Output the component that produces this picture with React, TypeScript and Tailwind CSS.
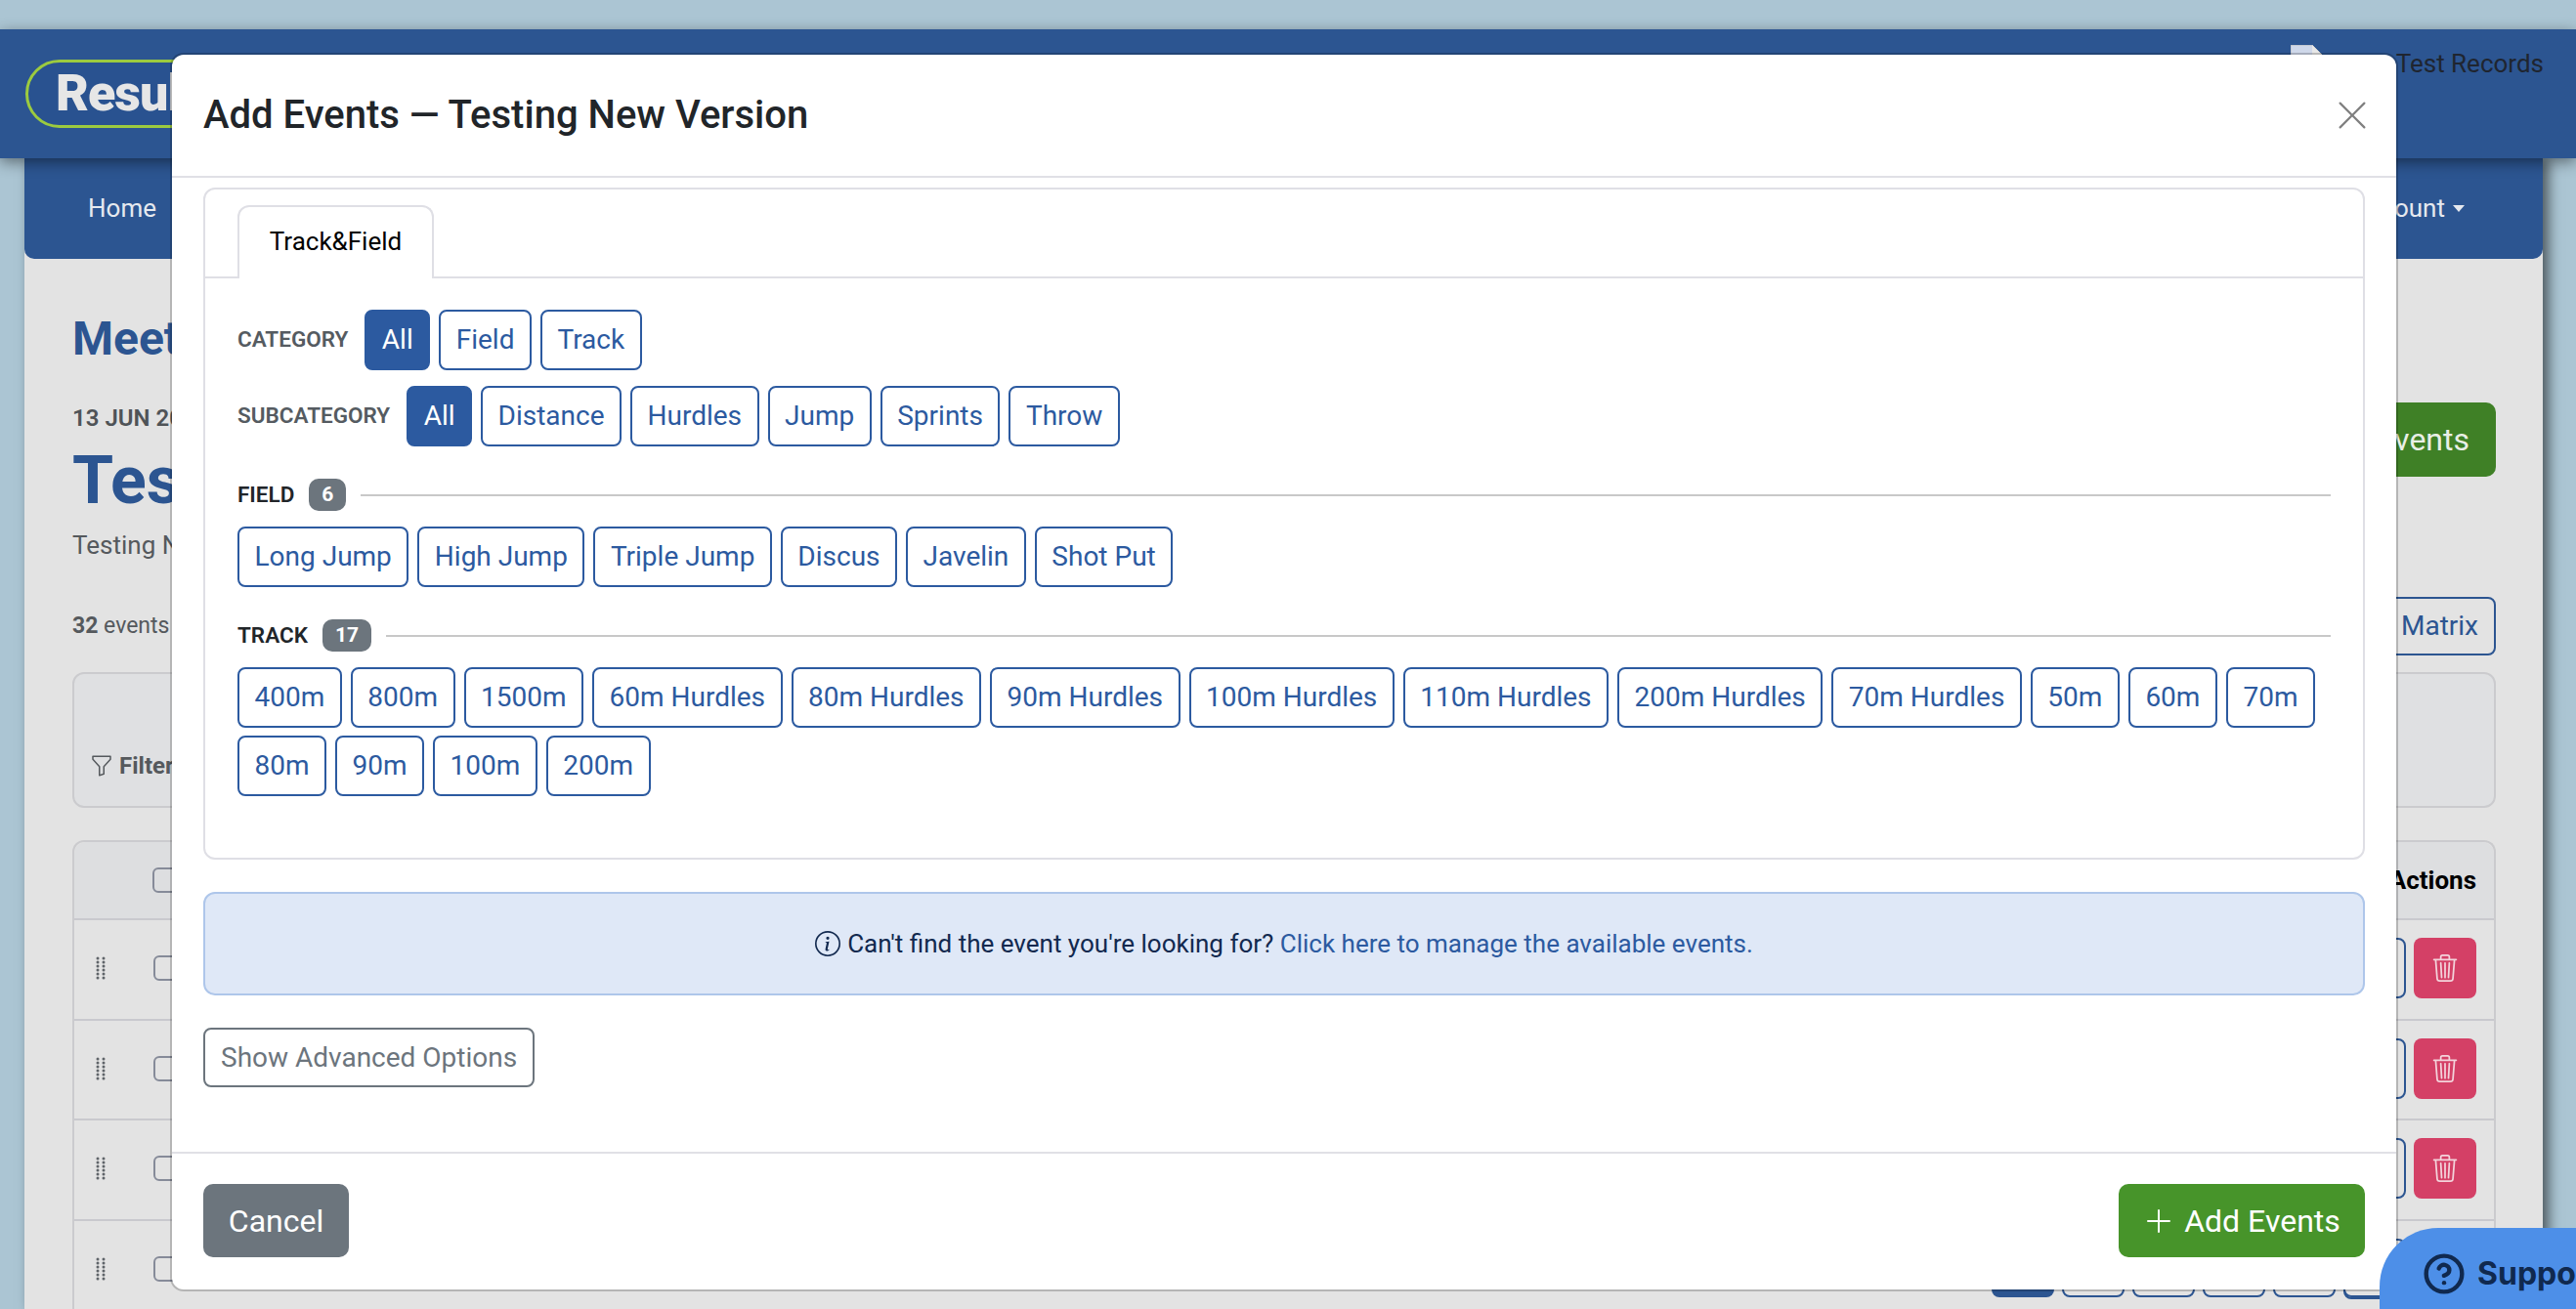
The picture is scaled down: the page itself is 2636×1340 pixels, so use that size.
import { BsFunnel, BsInfoCircle, BsPlusLg, BsTrash3, BsXLg } from 'react-icons/bs';
import { CircleHelp } from 'lucide-react';

const categories = ['Field', 'Track'];
const subcategories = ['Distance', 'Hurdles', 'Jump', 'Sprints', 'Throw'];
const fieldEvents = ['Long Jump', 'High Jump', 'Triple Jump', 'Discus', 'Javelin', 'Shot Put'];
const trackEvents = [
  '400m', '800m', '1500m', '60m Hurdles', '80m Hurdles', '90m Hurdles', '100m Hurdles', '110m Hurdles',
  '200m Hurdles', '70m Hurdles', '50m', '60m', '70m', '80m', '90m', '100m', '200m',
];

function Pill({ label, active }: { label: string; active?: boolean }) {
  return (
    <button
      className={`h-[62px] px-[15.5px] rounded-[8px] border-2 border-[#2c5aa0] text-[28px] leading-none ${
        active ? 'bg-[#2c5aa0] text-white' : 'bg-white text-[#2c5aa0]'
      }`}
    >
      {label}
    </button>
  );
}

function FilterRow({ label, items }: { label: string; items: string[] }) {
  return (
    <div className="flex items-center gap-[9px]">
      <span className="mr-[8px] text-[22.5px] font-semibold uppercase text-[#555b61]">{label}</span>
      <Pill label="All" active />
      {items.map((item) => (
        <Pill key={item} label={item} />
      ))}
    </div>
  );
}

function EventGroup({ label, count, items }: { label: string; count: number; items: string[] }) {
  return (
    <div>
      <div className="flex h-[33px] items-center">
        <span className="text-[22.5px] font-semibold uppercase text-[#212529]">{label}</span>
        <span className="ml-[15px] flex h-[33px] items-center rounded-[10px] bg-[#6c757d] px-[13px] text-[21px] font-bold leading-none text-white">
          {count}
        </span>
        <div className="ml-[15px] h-[2px] flex-1 bg-[#c8c8c8]" />
      </div>
      <div className="mt-[16px] flex flex-wrap gap-x-[9px] gap-y-[8px]">
        {items.map((item) => (
          <Pill key={item} label={item} />
        ))}
      </div>
    </div>
  );
}

function DragDots() {
  return (
    <svg width="10" height="24" viewBox="0 0 10 24" fill="#5f6469">
      {[2, 6, 10, 14, 18, 22].map((y) => (
        <g key={y}>
          <circle cx="2" cy={y} r="1.5" />
          <circle cx="8" cy={y} r="1.5" />
        </g>
      ))}
    </svg>
  );
}

function TableRow() {
  return (
    <div className="flex h-[102.5px] items-center border-t-2 border-[#c9c9ce] pb-[2px] pl-[22px] pr-[18px]">
      <DragDots />
      <div className="ml-[49px] h-[26px] w-[26px] rounded-[6px] border-2 border-[#868b99]" />
      <div className="ml-auto h-[62px] w-[64px] rounded-[8px] border-2 border-[#2c5591]" />
      <div className="ml-[8px] flex h-[62px] w-[64px] items-center justify-center rounded-[8px] bg-[#d44066] text-[28px] text-[#f3d3db]">
        <BsTrash3 />
      </div>
    </div>
  );
}

export default function App() {
  return (
    <div className="relative h-[1340px] w-[2636px] overflow-hidden bg-[#abc5d3] pt-[30px] font-['Roboto',sans-serif]">
      {/* Page behind the modal */}
      <header className="relative z-10 flex h-[132px] items-start justify-between bg-[#2c5591] pl-[26px] pr-[25px] shadow-[0_4px_14px_rgba(0,0,0,0.45)]">
        <div className="mt-[31px] flex h-[70px] w-[420px] items-center rounded-[35px] border-[3px] border-[#9ccb3f] bg-[#295290] pl-[28px] text-[52px] font-black leading-none tracking-[-1px] text-[#e6e6e6]">
          Results
        </div>
        <div className="mt-[16px] flex items-start pr-[8px]">
          <svg width="32" height="40" viewBox="0 0 32 40" className="mr-[76px]">
            <path d="M0 0h22l10 10v30H0z" fill="#cfd8ea" stroke="#b9b9b9" />
            <path d="M22 0v10h10z" fill="#e8e8e8" />
          </svg>
          <span className="text-[26px] leading-[38px] text-[#1f2530]">Test Records</span>
        </div>
      </header>

      <div className="ml-[25px] h-[1178px] w-[2577px] bg-[#e3e3e3] shadow-[6px_0_12px_rgba(0,0,0,0.55)]">
        <nav className="flex h-[103px] items-start justify-between rounded-b-[10px] bg-[#2c5591] pl-[65px] pr-[80px] pt-[30px] text-[26px] leading-[42px] text-[#e6e9ef]">
          <span>Home</span>
          <span className="flex items-center">
            Account
            <span className="ml-[8px] h-0 w-0 border-x-[6px] border-t-[7px] border-x-transparent border-t-[#e6e9ef]" />
          </span>
        </nav>

        <div className="pl-[49px] pr-[48px]">
          <div className="flex items-start justify-between">
            <div>
              <h2 className="mt-[49px] text-[48px] font-bold leading-[66px] text-[#2c5591]">Meet Details</h2>
              <p className="mt-[34px] text-[24px] font-semibold leading-[28px] text-[#4f5357]">13 JUN 2025</p>
              <h1 className="mt-[10px] text-[68px] font-bold leading-[80px] text-[#2c5591]">Testing New Version</h1>
              <p className="mt-[6px] text-[26px] leading-[40px] text-[#55595d]">Testing New Version</p>
            </div>
            <button className="mt-[147px] flex h-[76px] w-[400px] items-center justify-end rounded-[10px] bg-[#3f8026] pr-[27px] text-[32px] text-[#e9efe6]">
              Add Events
            </button>
          </div>

          <div className="mt-[33px] flex items-center justify-between">
            <span className="text-[23px] text-[#55595d]">
              <b>32</b> events
            </span>
            <button className="flex h-[60px] w-[300px] items-center justify-end rounded-[8px] border-2 border-[#2c5591] pr-[16px] text-[28px] text-[#2c5591]">
              Matrix
            </button>
          </div>

          <div className="mt-[17px] flex h-[139px] items-end rounded-[12px] border-2 border-[#cbcbce] bg-[#dfe0e2] pb-[23px] pl-[16px]">
            <div className="flex items-center">
              <BsFunnel className="text-[24px] text-[#55595d]" />
              <span className="ml-[6px] text-[24px] font-bold text-[#55595d]">Filter</span>
            </div>
          </div>

          <div className="mt-[33px] rounded-t-[12px] border-x-2 border-t-2 border-[#cbcbce]">
            <div className="flex h-[78px] items-center rounded-t-[12px] bg-[#dddee0] pl-[80px] pr-[18px]">
              <div className="h-[26px] w-[26px] rounded-[6px] border-2 border-[#868b99]" />
              <span className="ml-auto text-[26px] font-bold text-black">Actions</span>
            </div>
            <TableRow />
            <TableRow />
            <TableRow />
            <TableRow />
          </div>
        </div>
      </div>

      {/* Modal */}
      <div className="absolute left-[174px] top-[54px] z-20 flex h-[1268px] w-[2280px] flex-col rounded-[14px] border-2 border-black/20 bg-white bg-clip-padding">
        <div className="flex h-[126px] items-center justify-between border-b-2 border-[#e0e0e6] px-[32px]">
          <h5 className="text-[40px] font-medium text-[#212529]">Add Events — Testing New Version</h5>
          <BsXLg className="-mr-[5px] text-[36px] text-[#808080]" />
        </div>

        <div className="flex-1 px-[32px] pt-[10px]">
          <div className="h-[688px] rounded-[12px] border-2 border-[#dfdfe5]">
            <div className="h-[91px] border-b-2 border-[#dfdfe5] pl-[33px] pt-[16px]">
              <div className="flex h-[75px] w-[201px] items-center justify-center rounded-t-[12px] border-x-2 border-t-2 border-[#dfdfe5] bg-white pb-[3px] text-[26px] text-black">
                Track&amp;Field
              </div>
            </div>
            <div className="px-[33px] pt-[32px]">
              <div className="flex flex-col gap-[16px]">
                <FilterRow label="Category" items={categories} />
                <FilterRow label="Subcategory" items={subcategories} />
              </div>
              <div className="mt-[33px]">
                <EventGroup label="Field" count={6} items={fieldEvents} />
              </div>
              <div className="mt-[33px]">
                <EventGroup label="Track" count={17} items={trackEvents} />
              </div>
            </div>
          </div>

          <div className="mt-[33px] flex h-[106px] items-center justify-center rounded-[12px] border-2 border-[#aec6ea] bg-[#dfe8f7] text-[26px] text-[#12294f]">
            <BsInfoCircle className="mr-[7px] text-[26px]" />
            Can't find the event you're looking for?&nbsp;
            <span className="text-[#2c5aa0]">Click here to manage the available events.</span>
          </div>

          <button className="mt-[33px] h-[61px] rounded-[8px] border-2 border-[#6c757d] px-[16px] text-[28px] leading-none text-[#6c757d]">
            Show Advanced Options
          </button>
        </div>

        <div className="flex h-[141px] items-start justify-between border-t-2 border-[#e0e0e6] px-[32px] pt-[31px]">
          <button className="h-[75px] w-[149px] rounded-[10px] bg-[#6c757d] text-[32px] text-white">Cancel</button>
          <button className="flex h-[75px] w-[252px] items-center justify-center rounded-[10px] bg-[#47942a] text-[32px] text-white">
            <BsPlusLg className="mr-[10px] text-[32px]" />
            Add Events
          </button>
        </div>
      </div>

      {/* Pagination peeking out under the modal */}
      <div className="absolute left-[2038px] top-[1300px] z-10 flex gap-[8px]">
        <div className="h-[28px] w-[64px] rounded-b-[8px] bg-[#2c5591]" />
        {[0, 1, 2, 3, 4].map((i) => (
          <div key={i} className="h-[28px] w-[64px] rounded-b-[8px] border-2 border-[#2c5591]" />
        ))}
      </div>

      {/* Support widget */}
      <div className="absolute left-[2435px] top-[1257px] z-30 flex h-[140px] w-[260px] items-start rounded-[60px] bg-[#4d8fe8] pl-[44px] pt-[25px] font-['Inter',sans-serif] text-[32px] font-bold leading-[44px] text-[#10294f]">
        <CircleHelp size={44} strokeWidth={2.4} />
        <span className="ml-[12px]">Support</span>
      </div>
    </div>
  );
}
